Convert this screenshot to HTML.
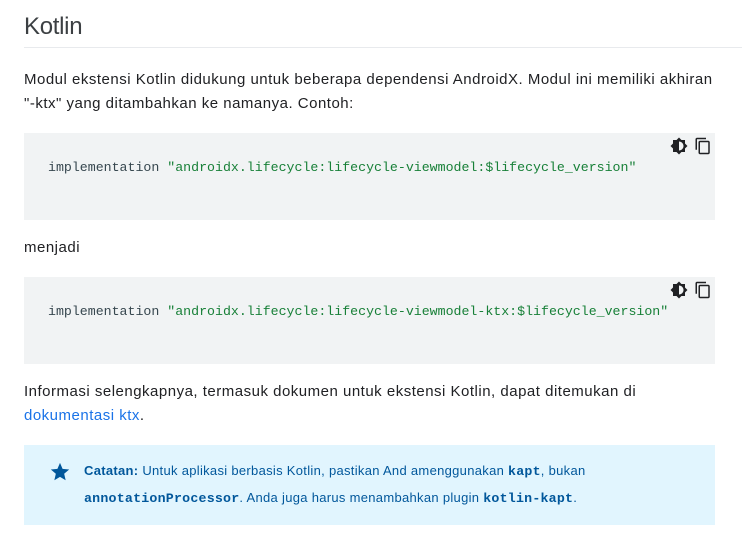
<!DOCTYPE html>
<html><head><meta charset="utf-8"><style>
body{margin:0;background:#fff;font-family:"Liberation Sans",sans-serif;color:#202124;width:742px;height:548px;overflow:hidden;position:relative}
.a{position:absolute}
h2{position:absolute;left:24px;top:13px;margin:0;font-weight:normal;font-size:24px;color:#3c4043;letter-spacing:-0.3px}
.hr{left:24px;right:0;top:47px;height:1px;background:#e8eaed}
p{position:absolute;left:24px;margin:0;font-size:15px;line-height:24px;letter-spacing:0.5px;width:720px;white-space:nowrap}
.code{left:24px;width:691px;height:87px;background:#f1f3f4}
.code span.t{position:absolute;left:24px;top:27px;font-family:"Liberation Mono",monospace;font-size:13.25px;color:#37474f;white-space:pre}
.s{color:#188038}
.ic{position:absolute;top:4px}
.note{left:24px;top:445px;width:691px;height:80px;background:#e1f5fe;color:#01579b}
.note .txt{position:absolute;left:60px;top:13px;font-size:13px;line-height:26px;letter-spacing:0.3px;width:640px;white-space:nowrap}
.note code{font-family:"Liberation Mono",monospace;font-weight:bold;font-size:13.3px;letter-spacing:0.2px}
</style></head><body>
<h2>Kotlin</h2>
<div class="a hr"></div>
<p style="top:68px">Modul ekstensi Kotlin didukung untuk beberapa dependensi AndroidX. Modul ini memiliki akhiran<br>"-ktx" yang ditambahkan ke namanya. Contoh:</p>
<div class="a code" style="top:133px">
<span class="t">implementation <span class="s">"androidx.lifecycle:lifecycle-viewmodel:$lifecycle_version"</span></span>
<svg class="ic" style="left:646px" width="18" height="18" viewBox="0 0 24 24"><path d="M20 8.69V4h-4.69L12 .69 8.69 4H4v4.69L.69 12 4 15.31V20h4.69L12 23.31 15.31 20H20v-4.69L23.31 12 20 8.69zM12 18V6c3.31 0 6 2.69 6 6s-2.69 6-6 6z" fill="#202124"/></svg>
<svg class="ic" style="left:670px" width="18" height="18" viewBox="0 0 24 24"><path d="M16 1H4c-1.1 0-2 .9-2 2v14h2V3h12V1zm3 4H8c-1.1 0-2 .9-2 2v14c0 1.1.9 2 2 2h11c1.1 0 2-.9 2-2V7c0-1.1-.9-2-2-2zm0 16H8V7h11v14z" fill="#202124"/></svg>
</div>
<p style="top:236px">menjadi</p>
<div class="a code" style="top:277px">
<span class="t">implementation <span class="s">"androidx.lifecycle:lifecycle-viewmodel-ktx:$lifecycle_version"</span></span>
<svg class="ic" style="left:646px" width="18" height="18" viewBox="0 0 24 24"><path d="M20 8.69V4h-4.69L12 .69 8.69 4H4v4.69L.69 12 4 15.31V20h4.69L12 23.31 15.31 20H20v-4.69L23.31 12 20 8.69zM12 18V6c3.31 0 6 2.69 6 6s-2.69 6-6 6z" fill="#202124"/></svg>
<svg class="ic" style="left:670px" width="18" height="18" viewBox="0 0 24 24"><path d="M16 1H4c-1.1 0-2 .9-2 2v14h2V3h12V1zm3 4H8c-1.1 0-2 .9-2 2v14c0 1.1.9 2 2 2h11c1.1 0 2-.9 2-2V7c0-1.1-.9-2-2-2zm0 16H8V7h11v14z" fill="#202124"/></svg>
</div>
<p style="top:380px">Informasi selengkapnya, termasuk dokumen untuk ekstensi Kotlin, dapat ditemukan di<br><span style="color:#1a73e8">dokumentasi ktx</span>.</p>
<div class="a note">
<svg style="position:absolute;left:25px;top:16px" width="22" height="22" viewBox="0 0 24 24"><path d="M12 17.27L18.18 21l-1.64-7.03L22 9.24l-7.19-.61L12 2 9.19 8.63 2 9.24l5.46 4.73L5.82 21z" fill="#01579b"/></svg>
<div class="txt"><b>Catatan:</b> Untuk aplikasi berbasis Kotlin, pastikan And amenggunakan <code>kapt</code>, bukan<br><code>annotationProcessor</code>. Anda juga harus menambahkan plugin <code>kotlin-kapt</code>.</div>
</div>
</body></html>
